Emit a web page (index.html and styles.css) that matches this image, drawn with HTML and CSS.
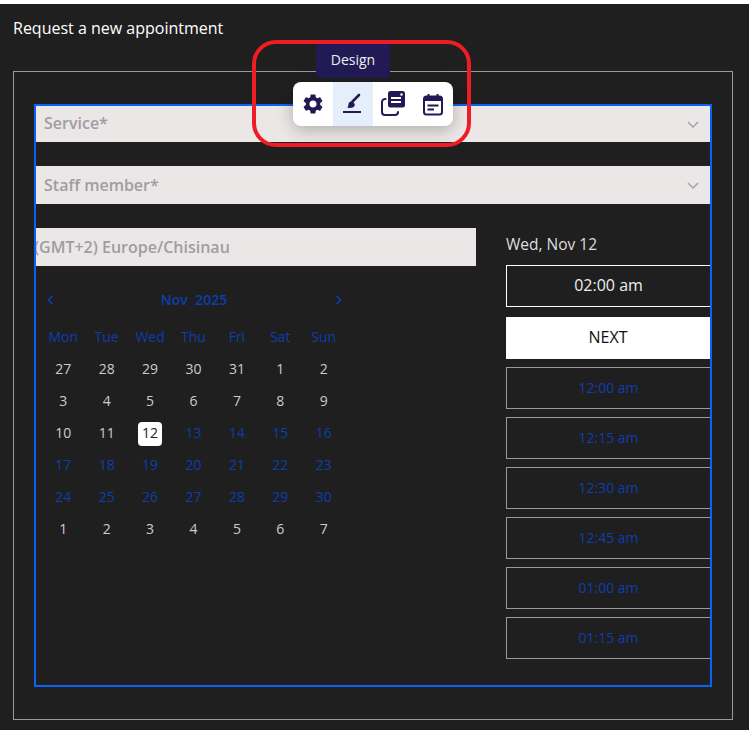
FILE: index.html
```html
<!DOCTYPE html>
<html lang="en">
<head>
    <meta charset="UTF-8">
    <meta name="viewport" content="width=device-width, initial-scale=1.0">
    <title>Request a new appointment</title>
    <link rel="stylesheet" href="styles.css">
</head>
<body>
    <div class="widget">
        <h1 class="title">Request a new appointment</h1>
        <div class="frame">
            <div class="booking">
                <div class="field field-first">
                    <span>Service*</span>
                    <svg class="chevron" viewBox="0 0 12 7"><path d="M1 1l5 5 5-5"/></svg>
                </div>
                <div class="field field-second">
                    <span>Staff member*</span>
                    <svg class="chevron" viewBox="0 0 12 7"><path d="M1 1l5 5 5-5"/></svg>
                </div>
                <div class="columns">
                    <div class="left-col">
                        <div class="field field-zone"><span>(GMT+2) Europe/Chisinau</span></div>
                        <div class="calendar">
                            <div class="cal-nav">
                                <svg class="arrow" viewBox="0 0 7 10"><path d="M5.5 1l-4 4 4 4"/></svg>
                                <span class="cal-month">Nov&nbsp;&nbsp;2025</span>
                                <svg class="arrow" viewBox="0 0 7 10"><path d="M1.5 1l4 4-4 4"/></svg>
                            </div>
                            <div class="cal-grid">
                                <div class="weekday">Mon</div>
                                <div class="weekday">Tue</div>
                                <div class="weekday">Wed</div>
                                <div class="weekday">Thu</div>
                                <div class="weekday">Fri</div>
                                <div class="weekday">Sat</div>
                                <div class="weekday">Sun</div>

                                <div class="day">27</div>
                                <div class="day">28</div>
                                <div class="day">29</div>
                                <div class="day">30</div>
                                <div class="day">31</div>
                                <div class="day">1</div>
                                <div class="day">2</div>

                                <div class="day">3</div>
                                <div class="day">4</div>
                                <div class="day">5</div>
                                <div class="day">6</div>
                                <div class="day">7</div>
                                <div class="day">8</div>
                                <div class="day">9</div>

                                <div class="day">10</div>
                                <div class="day">11</div>
                                <div class="day"><span class="today">12</span></div>
                                <div class="day open">13</div>
                                <div class="day open">14</div>
                                <div class="day open">15</div>
                                <div class="day open">16</div>

                                <div class="day open">17</div>
                                <div class="day open">18</div>
                                <div class="day open">19</div>
                                <div class="day open">20</div>
                                <div class="day open">21</div>
                                <div class="day open">22</div>
                                <div class="day open">23</div>

                                <div class="day open">24</div>
                                <div class="day open">25</div>
                                <div class="day open">26</div>
                                <div class="day open">27</div>
                                <div class="day open">28</div>
                                <div class="day open">29</div>
                                <div class="day open">30</div>

                                <div class="day">1</div>
                                <div class="day">2</div>
                                <div class="day">3</div>
                                <div class="day">4</div>
                                <div class="day">5</div>
                                <div class="day">6</div>
                                <div class="day">7</div>
                            </div>
                        </div>
                    </div>
                    <div class="right-col">
                        <div class="date-label">Wed, Nov 12</div>
                        <div class="slots">
                            <div class="slot slot-picked">02:00 am</div>
                            <div class="slot slot-next">NEXT</div>
                            <div class="slot">12:00 am</div>
                            <div class="slot">12:15 am</div>
                            <div class="slot">12:30 am</div>
                            <div class="slot">12:45 am</div>
                            <div class="slot">01:00 am</div>
                            <div class="slot">01:15 am</div>
                        </div>
                    </div>
                </div>
            </div>
        </div>
    </div>

    <!-- editor toolbar that floats over the widget -->
    <div class="tooltip">Design</div>
    <div class="toolbar">
        <div class="tool">
            <svg viewBox="0 0 24 24"><path fill="#221a55" d="M19.14 12.94c.04-.3.06-.61.06-.94 0-.32-.02-.64-.07-.94l2.03-1.58c.18-.14.23-.41.12-.61l-1.92-3.32c-.12-.22-.37-.29-.59-.22l-2.39.96c-.5-.38-1.03-.7-1.62-.94l-.36-2.54c-.04-.24-.24-.41-.48-.41h-3.84c-.24 0-.43.17-.47.41l-.36 2.54c-.59.24-1.13.57-1.62.94l-2.39-.96c-.22-.08-.47 0-.59.22L2.74 8.87c-.12.21-.08.47.12.61l2.03 1.58c-.05.3-.09.63-.09.94s.02.64.07.94l-2.03 1.58c-.18.14-.23.41-.12.61l1.92 3.32c.12.22.37.29.59.22l2.39-.96c.5.38 1.03.7 1.62.94l.36 2.54c.05.24.24.41.48.41h3.84c.24 0 .44-.17.47-.41l.36-2.54c.59-.24 1.13-.56 1.62-.94l2.39.96c.22.08.47 0 .59-.22l1.92-3.32c.12-.22.07-.47-.12-.61l-2.01-1.58zM12 15.6c-1.98 0-3.6-1.62-3.6-3.6s1.62-3.6 3.6-3.6 3.6 1.62 3.6 3.6-1.62 3.6-3.6 3.6z"/></svg>
        </div>
        <div class="tool tool-active">
            <svg viewBox="0 0 24 24">
                <path fill="none" stroke="#221a55" stroke-width="2.600" stroke-linecap="round" d="M18 3l-6.500 6.500"/>
                <path fill="#221a55" d="M10 9.500c2 0 4 1.800 3.800 3.500-.3 2.200-2.800 3.300-7.800 2.800 1.300-.8 1.200-2 1.400-3.300.2-1.600 1.100-3 2.600-3z"/>
                <path fill="none" stroke="#221a55" stroke-width="2" d="M2 20h18"/>
            </svg>
        </div>
        <div class="tool">
            <svg viewBox="0 0 24 24">
                <path fill="none" stroke="#221a55" stroke-width="2" stroke-linecap="round" d="M4.500 7A3 3 0 0 0 1 10v10a3 3 0 0 0 3 3h10a3 3 0 0 0 3-3"/>
                <rect x="7" y="-1" width="17" height="16.500" rx="2.500" fill="#221a55"/>
                <path fill="none" stroke="#fff" stroke-width="1.800" d="M10 6h10M10 10h10"/>
                <circle cx="20.500" cy="2.500" r="1.200" fill="#fff"/>
            </svg>
        </div>
        <div class="tool">
            <svg viewBox="0 0 24 24">
                <rect x="3" y="4.500" width="18" height="18" rx="2.500" fill="none" stroke="#221a55" stroke-width="2"/>
                <path fill="#221a55" d="M3 5h18v4H3z"/>
                <path fill="none" stroke="#221a55" stroke-width="2" d="M7.500 2v3M16.500 2v3M6.500 13.500h11M6.500 17.500h6.500"/>
            </svg>
        </div>
    </div>
    <div class="highlight"></div>
</body>
</html>
```

FILE: styles.css
```css
body {
    font-family: 'Open Sans', sans-serif;
    margin: 0;
    padding: 4px 0 0;
    background: #fff;
    color: #fff;
}
.widget {
    background: #1f1f1f;
    height: 726px;
    padding: 14px 0 0 13px;
    box-sizing: border-box;
    overflow: hidden;
}
.title {
    font-size: 16px;
    font-weight: 400;
    line-height: 21px;
    margin: 0 0 32px;
    color: #fff;
}
.frame {
    width: 720px;
    height: 649px;
    box-sizing: border-box;
    border: 1px solid #999;
    padding: 32px 0 0 20px;
}
.booking {
    width: 678px;
    height: 583px;
    box-sizing: border-box;
    border: 2px solid #0a63f5;
    overflow: hidden;
}
.field {
    background: #ebe7e6;
    color: #9d9da4;
    font-size: 16px;
    font-weight: 600;
    display: flex;
    align-items: center;
    justify-content: space-between;
    padding: 0 11px 0 8px;
    white-space: nowrap;
}
.field-first {
    height: 36px;
    margin-bottom: 24px;
}
.field-first span {
    margin-top: -2px;
}
.field-second {
    height: 38px;
    margin-bottom: 24px;
}
.field-zone {
    height: 38px;
    padding: 0;
}
.field-zone span {
    margin-left: -2px;
}
.chevron {
    width: 12px;
    height: 7px;
    fill: none;
    stroke: #a3a3aa;
    stroke-width: 1.5;
}
.columns {
    display: flex;
    gap: 30px;
}
.left-col {
    width: 440px;
    overflow: hidden;
}
.right-col {
    width: 204px;
}
.calendar {
    width: 304px;
    margin: 18px 0 0 5.5px;
}
.cal-nav {
    display: flex;
    align-items: center;
    justify-content: space-between;
    height: 32px;
    margin-bottom: 5px;
    padding: 0 4px 0 5px;
    color: #0c3eac;
    font-size: 14px;
    font-weight: 600;
}
.cal-month {
    margin-top: -2px;
}
.arrow {
    width: 7px;
    height: 10px;
    fill: none;
    stroke: #0c3eac;
    stroke-width: 1.6;
}
.cal-grid {
    display: grid;
    grid-template-columns: repeat(7, 1fr);
    grid-auto-rows: 32px;
    font-size: 14px;
    text-align: center;
}
.weekday {
    color: #0c3eac;
    line-height: 32px;
}
.day {
    color: #ccc;
    line-height: 32px;
}
.day.open {
    color: #0c3eac;
}
.today {
    display: inline-block;
    width: 24px;
    height: 24px;
    margin-top: 5px;
    line-height: 22px;
    background: #fff;
    color: #222;
    border-radius: 4px;
}
.date-label {
    height: 37px;
    line-height: 32px;
    font-size: 15.5px;
    color: #ddd;
}
.slots {
    display: flex;
    flex-direction: column;
    gap: 8px;
}
.slot {
    height: 42px;
    box-sizing: border-box;
    border: 1px solid #999;
    border-right: none;
    color: #0c3eac;
    font-size: 14px;
    line-height: 40px;
    text-align: center;
}
.slot-picked {
    border-color: #fff;
    color: #eee;
    font-size: 16px;
    font-weight: 500;
    line-height: 38px;
    margin-bottom: 2px;
}
.slot-next {
    border: none;
    background: #fff;
    color: #111;
    font-size: 16px;
    font-weight: 500;
    line-height: 40px;
}
.tooltip {
    position: absolute;
    left: 316px;
    top: 42px;
    width: 74px;
    height: 36px;
    line-height: 36px;
    background: #221a55;
    border-radius: 0 0 4px 4px;
    color: #eee;
    font-size: 14px;
    text-align: center;
}
.toolbar {
    position: absolute;
    left: 293px;
    top: 82px;
    display: flex;
    background: #fff;
    border-radius: 8px;
    box-shadow: 0 4px 16px rgba(0, 0, 0, 0.25);
}
.tool {
    width: 40px;
    height: 44px;
    display: flex;
    align-items: center;
    justify-content: center;
}
.tool svg {
    width: 24px;
    height: 24px;
    overflow: visible;
}
.tool-active {
    background: #e5eefb;
}
.highlight {
    position: absolute;
    left: 252px;
    top: 40px;
    width: 219px;
    height: 107px;
    box-sizing: border-box;
    border: 4px solid #ee1c25;
    border-radius: 24px;
}
```
